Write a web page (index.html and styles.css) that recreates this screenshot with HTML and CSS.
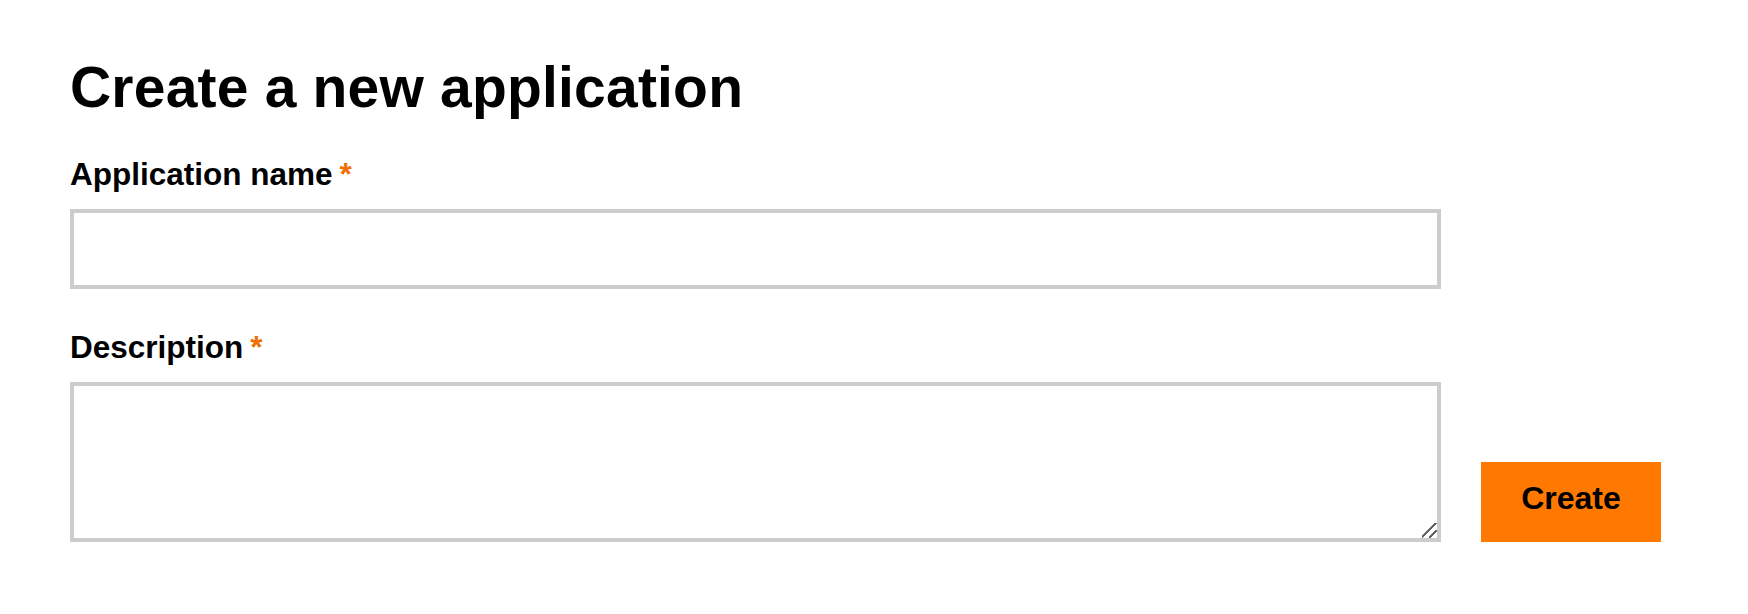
FILE: index.html
```html
<!DOCTYPE html>
<html lang="en">
<head>
<meta charset="utf-8">
<title>Create a new application</title>
<link rel="stylesheet" href="styles.css">
</head>
<body>
<main class="page">
  <h1 class="title">Create a new application</h1>
  <form class="form-row">
    <div class="fields">
      <div class="field">
        <label class="label" for="app-name">Application name<span class="req">*</span></label>
        <input class="control" id="app-name" type="text">
      </div>
      <div class="field">
        <label class="label" for="app-desc">Description<span class="req">*</span></label>
        <textarea class="control area" id="app-desc"></textarea>
      </div>
    </div>
    <button class="btn" type="button">Create</button>
  </form>
</main>
</body>
</html>
```

FILE: styles.css
```css
html, body {
  margin: 0;
  padding: 0;
  background: #fff;
}

body {
  font-family: "Liberation Sans", Arial, Helvetica, sans-serif;
  color: #000;
}

.page {
  padding: 53px 0 0 70px;
}

.title {
  font-size: 57px;
  line-height: 68px;
  font-weight: 700;
  margin: 0 0 30px 0;
  letter-spacing: 0.2px;
}

.form-row {
  display: flex;
  align-items: flex-end;
  gap: 40px;
}

.fields {
  width: 1371px;
  display: flex;
  flex-direction: column;
  gap: 35px;
}

.field {
  display: flex;
  flex-direction: column;
}

.label {
  display: block;
  font-size: 31.5px;
  line-height: 47px;
  font-weight: 700;
  margin-bottom: 11px;
}

.req {
  color: #f16e00;
  margin-left: 7px;
}

.control {
  box-sizing: border-box;
  width: 100%;
  height: 80px;
  border: 4px solid #ccc;
  border-radius: 0;
  background: #fff;
  margin: 0;
  padding: 8px 14px;
  font-family: inherit;
  font-size: 28px;
  outline: none;
}

.area {
  height: 160px;
  display: block;
  resize: both;
}

.area::-webkit-resizer {
  width: 16px;
  height: 16px;
  background-color: transparent;
  background-image:
    linear-gradient(135deg, transparent 9px, #666 9px, #666 11px, transparent 11px),
    linear-gradient(135deg, transparent 4.7px, #666 4.7px, #666 6.7px, transparent 6.7px);
  background-size: 16px 16px, 8px 8px;
  background-position: 0 0, 7px 7px;
  background-repeat: no-repeat;
}

.btn {
  flex: none;
  width: 180px;
  height: 80px;
  background: #ff7900;
  border: none;
  border-radius: 0;
  color: #000;
  font-family: inherit;
  font-size: 32px;
  font-weight: 700;
  padding: 0 0 7px 0;
  margin: 0;
  cursor: pointer;
}
```
